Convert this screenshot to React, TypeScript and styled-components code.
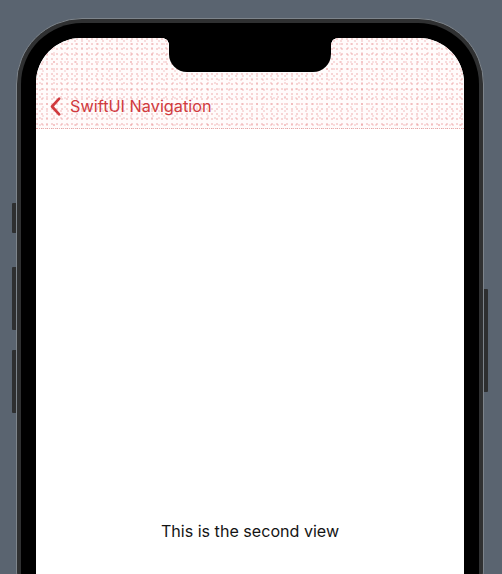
import React from "react";
import styled, { createGlobalStyle } from "styled-components";

const Global = createGlobalStyle`
  html, body { margin: 0; padding: 0; }
  body {
    background: #5a6470;
    font-family: Inter, "Noto Sans", "Liberation Sans", sans-serif;
    overflow: hidden;
    width: 502px;
    height: 574px;
  }
`;

const Page = styled.div`
  display: flex;
  padding: 18px 0 0 16px;
  width: 502px;
  height: 574px;
  box-sizing: border-box;
  overflow: hidden;
`;

const Phone = styled.div`
  position: relative;
  width: 468px;
  height: 620px;
  flex: none;
  box-sizing: border-box;
  border-radius: 66px;
  background: #2f3031;
  border: 1px solid #7d848b;
  padding: 4px;
  display: flex;
`;

const SideButton = styled.div<{ $side: "left" | "right"; $top: number; $h: number }>`
  position: absolute;
  ${(p) => (p.$side === "left" ? "left: -5px;" : "right: -5px;")}
  top: ${(p) => p.$top}px;
  width: 4px;
  height: ${(p) => p.$h}px;
  background: #2e2f30;
  border-radius: ${(p) => (p.$side === "left" ? "1px 0 0 1px" : "0 1px 1px 0")};
`;

const Bezel = styled.div`
  flex: 1;
  display: flex;
  background: #000;
  border-radius: 61px;
  padding: 15px 15px 0 15px;
`;

const Screen = styled.div`
  position: relative;
  flex: 1;
  display: flex;
  flex-direction: column;
  background: #ffffff;
  border-radius: 45px 45px 0 0;
  overflow: hidden;
`;

const Notch = styled.div`
  position: absolute;
  top: 0;
  left: 50%;
  transform: translateX(-50%);
  width: 162px;
  height: 34px;
  background: #000;
  border-radius: 0 0 18px 18px;
  z-index: 2;

  &::before,
  &::after {
    content: "";
    position: absolute;
    top: 0;
    width: 6px;
    height: 6px;
  }
  &::before {
    left: -6px;
    background: radial-gradient(circle at 0 100%, transparent 5.5px, #000 6px);
  }
  &::after {
    right: -6px;
    background: radial-gradient(circle at 100% 100%, transparent 5.5px, #000 6px);
  }
`;

const NavBar = styled.div`
  height: 91px;
  flex: none;
  display: flex;
  align-items: flex-end;
  padding: 0 0 11px 14px;
  box-sizing: border-box;
  background-color: #fffbfb;
  background-image:
    radial-gradient(circle at 1px 1px, rgba(226, 110, 112, 0.42) 0.6px, transparent 0.9px),
    radial-gradient(circle at 1px 1px, rgba(226, 110, 112, 0.34) 0.6px, transparent 0.9px),
    radial-gradient(circle at 1px 1px, rgba(226, 110, 112, 0.28) 0.6px, transparent 0.9px);
  background-size: 5px 5px, 7px 7px, 11px 9px;
  background-position: 0 0, 3px 2px, 6px 5px;
  border-bottom: 1px dotted rgba(215, 120, 120, 0.55);
`;

const BackButton = styled.div`
  display: flex;
  align-items: center;
  gap: 9px;
  color: #d03a3e;
  font-size: 16.3px;
  line-height: 22px;
`;

const Content = styled.div`
  flex: 1;
  display: flex;
  justify-content: center;
  padding-top: 391px;
`;

const Label = styled.div`
  color: #141414;
  font-size: 16.1px;
  line-height: 22px;
`;

export default function App() {
  return (
    <>
      <Global />
      <Page>
        <Phone>
          <SideButton $side="left" $top={184} $h={30} />
          <SideButton $side="left" $top={248} $h={63} />
          <SideButton $side="left" $top={331} $h={63} />
          <SideButton $side="right" $top={270} $h={103} />
          <Bezel>
            <Screen>
              <Notch />
              <NavBar>
                <BackButton>
                  <svg width="11" height="19" viewBox="0 0 11 19" fill="none">
                    <path
                      d="M9.2 1.6 L2 9.5 L9.2 17.4"
                      stroke="#d03a3e"
                      strokeWidth="2.6"
                      strokeLinecap="round"
                      strokeLinejoin="round"
                    />
                  </svg>
                  <span>SwiftUI Navigation</span>
                </BackButton>
              </NavBar>
              <Content>
                <Label>This is the second view</Label>
              </Content>
            </Screen>
          </Bezel>
        </Phone>
      </Page>
    </>
  );
}
